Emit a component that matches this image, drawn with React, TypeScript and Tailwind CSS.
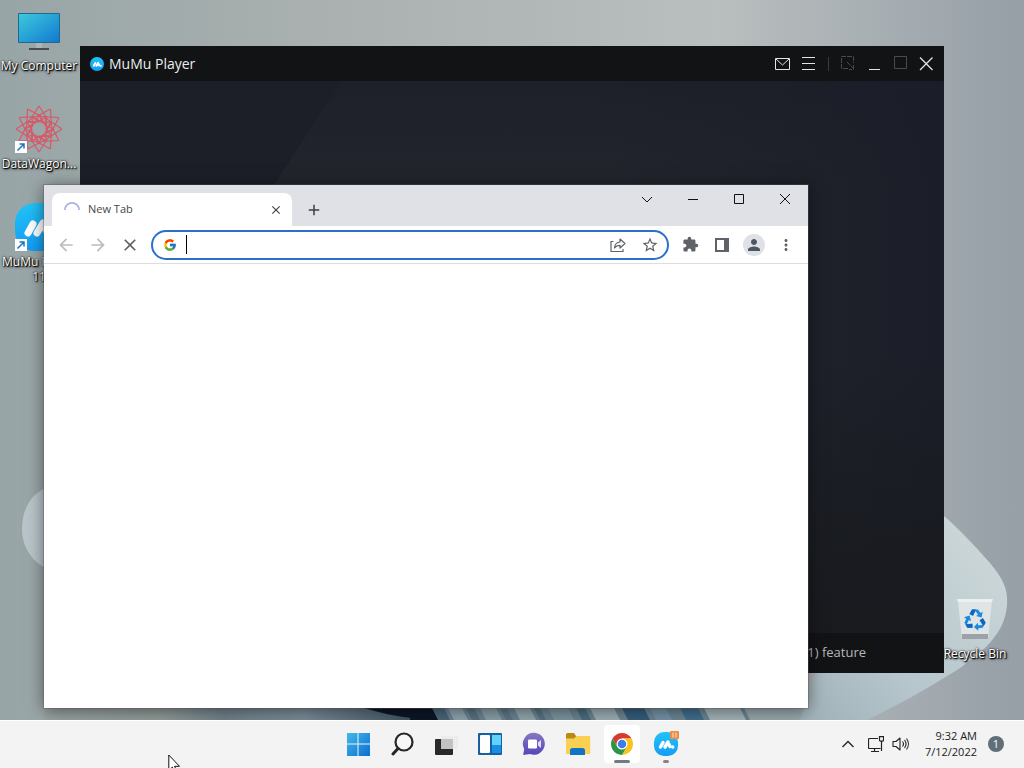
/**
 * App.tsx — desktop with two open windows and a centered taskbar
 */
import type { ReactNode } from 'react'
import { FcGoogle } from 'react-icons/fc'
import { MdArrowBack, MdArrowForward, MdClose, MdExtension, MdMoreVert, MdPerson, MdStarOutline, MdAdd } from 'react-icons/md'

// ─── Logos ────────────────────────────────────────────────────────────────────
function MuMuLogo({ className, round }: { className: string; round?: boolean }) {
  return (
    <svg viewBox="0 0 48 48" className={className} aria-hidden="true">
      <defs>
        <linearGradient id="mumu" x1="0" y1="0" x2="0" y2="1">
          <stop offset="0" stopColor="#22c3f8" />
          <stop offset="1" stopColor="#149cf5" />
        </linearGradient>
      </defs>
      <rect width="48" height="48" rx={round ? 24 : 20} fill="url(#mumu)" />
      <g stroke="#fff" strokeWidth="7" strokeLinecap="round">
        <path d="M13 30l5-9M22 30l6-10M28 21l4 8" />
      </g>
      <circle cx="37.500" cy="30" r="3.500" fill="#fff" />
    </svg>
  )
}

function ChromeLogo() {
  return (
    <svg viewBox="0 0 48 48" className="size-6" aria-hidden="true">
      <path d="M4.95 13A22 22 0 0 1 43.05 13H24L14.5 29.5Z" fill="#d93a2f" />
      <path d="M43.05 13A22 22 0 0 1 24 46L33.5 29.5L24 13Z" fill="#fbc21b" />
      <path d="M24 46A22 22 0 0 1 4.95 13L14.5 29.5H33.5Z" fill="#2b9547" />
      <circle cx="24" cy="24" r="11" fill="#fff" />
      <circle cx="24" cy="24" r="8.5" fill="#3b7de9" />
    </svg>
  )
}

function WindowsLogo() {
  return (
    <svg viewBox="0 0 24 24" className="size-6" aria-hidden="true">
      <defs>
        <linearGradient id="win" x1="0" y1="0" x2="1" y2="1">
          <stop offset="0" stopColor="#43b9ea" />
          <stop offset="1" stopColor="#0a6fd0" />
        </linearGradient>
      </defs>
      <path d="M1 1h10.500v10.500H1zM12.500 1H24v10.500H12.500zM1 12.500h10.500V24H1zM12.500 12.500H24V24H12.500z" fill="url(#win)" />
    </svg>
  )
}

function SearchGlyph() {
  return (
    <svg viewBox="0 0 24 24" className="size-6" fill="none" stroke="#262626" aria-hidden="true">
      <circle cx="14" cy="10" r="8.500" strokeWidth="2.200" fill="#f7f7f7" />
      <path d="M8 16.500L3 22" strokeWidth="3" strokeLinecap="round" />
    </svg>
  )
}

function TaskViewGlyph() {
  return (
    <svg viewBox="0 0 24 24" className="size-6" aria-hidden="true">
      <rect x="1" y="7" width="18" height="16" rx="1" fill="#292929" />
      <rect x="7" y="4" width="17" height="13" rx="1" fill="#ececec" />
      <rect x="7" y="7" width="12" height="10" fill="#c2c2c2" />
    </svg>
  )
}

function WidgetsGlyph() {
  return (
    <svg viewBox="0 0 26 24" className="h-6 w-[26px]" aria-hidden="true">
      <rect x="1" y="1" width="24" height="22" rx="1" fill="#17609f" />
      <rect x="3" y="3" width="10" height="18" rx="1" fill="#fff" />
      <rect x="15" y="3" width="9" height="10" fill="#62d2fa" />
      <rect x="15" y="13" width="9" height="8" fill="#1a8ee6" />
    </svg>
  )
}

function ChatGlyph() {
  return (
    <svg viewBox="0 0 24 24" className="size-6" aria-hidden="true">
      <defs>
        <linearGradient id="chat" x1="0" y1="0" x2="0" y2="1">
          <stop offset="0" stopColor="#8a76c2" />
          <stop offset="1" stopColor="#5148b8" />
        </linearGradient>
      </defs>
      <path d="M12.500 .8a11 11 0 1 1-4.500 21.300L1.200 23l1-6A11 11 0 0 1 12.500 .8z" fill="url(#chat)" />
      <rect x="6" y="7.500" width="9" height="9" rx="1.200" fill="#fff" />
      <path d="M16 10.500l3-2.500v8l-3-2.500z" fill="#e3defa" />
    </svg>
  )
}

function FolderGlyph() {
  return (
    <svg viewBox="0 0 26 24" className="h-6 w-[26px]" aria-hidden="true">
      <path d="M1 2.500A1.500 1.500 0 0 1 2.500 1H9l2 3v3H1z" fill="#b98a14" />
      <path d="M1 6.500h8L11.500 4H24a1.200 1.200 0 0 1 1.200 1.200V22H1z" fill="#fad052" />
      <path d="M5 23v-4.500a2.500 2.500 0 0 1 2.500-2.500h10a2.500 2.500 0 0 1 2.500 2.500V23z" fill="#1273c4" />
    </svg>
  )
}

// ─── Desktop ──────────────────────────────────────────────────────────────────
const FOLDS = [
  { x: 436, w: 12, c: '#4a6779' }, { x: 452, w: 14, c: '#8fa3ac' }, { x: 470, w: 8, c: '#58727f' },
  { x: 484, w: 16, c: '#8a9fa7' }, { x: 504, w: 7, c: '#5d7786' }, { x: 518, w: 16, c: '#92a6ad' },
  { x: 538, w: 6, c: '#587380' }, { x: 552, w: 20, c: '#7c959f' }, { x: 580, w: 9, c: '#4c6c80' },
  { x: 594, w: 24, c: '#9baeb4' }, { x: 626, w: 22, c: '#355d7b' }, { x: 654, w: 16, c: '#7493a6' },
  { x: 684, w: 18, c: '#416e8c' }, { x: 708, w: 36, c: '#a3b3b8' }, { x: 748, w: 60, c: '#98a8ac' },
]

function Wallpaper() {
  return (
    <svg viewBox="0 0 1024 720" preserveAspectRatio="none" className="absolute inset-0 size-full" aria-hidden="true">
      <defs>
        <linearGradient id="sky" x1="0" x2="1">
          <stop offset="0" stopColor="#98a5a6" />
          <stop offset=".3" stopColor="#a9b0af" />
          <stop offset=".7" stopColor="#b9bebe" />
          <stop offset=".92" stopColor="#a0a8ae" />
          <stop offset="1" stopColor="#969ea6" />
        </linearGradient>
        <linearGradient id="petal" x1="0" y1="1" x2="1" y2="0">
          <stop offset="0" stopColor="#9fb1b7" />
          <stop offset=".35" stopColor="#b6c6cc" />
          <stop offset=".8" stopColor="#c9d5d7" />
          <stop offset="1" stopColor="#c5cfd2" />
        </linearGradient>
        <linearGradient id="floor" x1="0" x2="1">
          <stop offset="0" stopColor="#98a3a2" />
          <stop offset=".3" stopColor="#8f9a97" />
          <stop offset=".45" stopColor="#71818a" />
          <stop offset=".65" stopColor="#7b8c98" />
          <stop offset=".85" stopColor="#50636f" />
          <stop offset="1" stopColor="#27405c" />
        </linearGradient>
      </defs>
      <rect width="1024" height="720" fill="url(#sky)" />
      <path d="M44 489C30 495 22 511 22 529S32 561 44 567L90 560V480z" fill="#b9c5ca" />
      <rect x="44" y="700" width="400" height="20" fill="url(#floor)" />
      <path d="M340 700C372 712 402 719 440 720L424 700z" fill="#0d1626" />
      <rect x="424" y="700" width="384" height="20" fill="#6b8593" />
      <path d="M412 700h16l16 20h-34z" fill="#0d1626" />
      {FOLDS.map(f => (
        <path key={f.x} d={`M${f.x - 8} 700h${f.w}l10 20h-${f.w}z`} fill={f.c} />
      ))}
      <path d="M944 516C960 530 974 545 990 563C1004 580 1008 590 1007 605C1005 632 985 651 957 670C930 687 900 704 867 720H800L824 650L900 500z" fill="url(#petal)" />
    </svg>
  )
}

function DesktopIcon({ label, shortcut, children }: { label: string; shortcut?: boolean; children: ReactNode }) {
  return (
    <button className="flex min-h-[98px] w-[78px] flex-col items-center pt-[7px]">
      <span className="relative flex size-12 items-center justify-center">
        {children}
        {shortcut && (
          <span className="absolute bottom-0 left-0 flex size-3 items-center justify-center bg-white">
            <svg viewBox="0 0 12 12" className="size-3" fill="none" stroke="#1b76c0" strokeWidth="1.500" aria-hidden="true">
              <path d="M2.500 9.500L9 3M4.500 3H9v4.500" />
            </svg>
          </span>
        )}
      </span>
      <span className="mt-[3px] text-center text-[12px] leading-[15px] text-white [text-shadow:1px_1px_1px_#000,1px_1px_3px_#000,0_0_2px_#000]">
        {label}
      </span>
    </button>
  )
}

function MonitorArt() {
  return (
    <svg viewBox="0 0 48 48" className="size-12" aria-hidden="true">
      <defs>
        <linearGradient id="screen" x1="0" y1="0" x2="1" y2="1">
          <stop offset="0" stopColor="#3bc9dd" />
          <stop offset="1" stopColor="#1379cf" />
        </linearGradient>
      </defs>
      <rect x="3" y="6" width="42" height="30" rx="1" fill="#20688c" />
      <rect x="4" y="7" width="40" height="28" fill="url(#screen)" />
      <rect x="21" y="36" width="6" height="5" fill="#adb5b7" />
      <rect x="14" y="41" width="20" height="2" fill="#474d50" />
    </svg>
  )
}

function StarArt() {
  return (
    <svg viewBox="-24 -24 48 48" className="size-12" fill="none" stroke="#d65a68" strokeWidth="1.200" aria-hidden="true">
      {/* twelve-pointed outer star with a smaller knot inside */}
      {[0, 30, 60, 90, 120, 150, 180, 210, 240, 270, 300, 330].map(a => (
        <g key={a} transform={`rotate(${a})`}>
          <path d="M0-23L19.900 11.500" opacity="0" />
          <path d="M0-23L9-9M0-23L-9-9" />
          <path d="M-6-12L4-6M-4-6L0-14L4-6" />
        </g>
      ))}
    </svg>
  )
}

function BinArt() {
  return (
    <svg viewBox="0 0 48 48" className="size-12" aria-hidden="true">
      <path d="M7 6h34l-4 38H11z" fill="#dfe4e5" />
      <path d="M6 4h36l-1 3H7z" fill="#edf0f0" />
      <path d="M11 39h26v5H11z" fill="#9da2a8" />
      {[0, 120, 240].map(a => (
        <g key={a} transform={`translate(24 25) rotate(${a})`}>
          <path d="M-5.500-6L-3-10.500H3L5.500-7L7.800-8.200L6.500-2.500L1-4L3-5.300L.5-9L-2-4.200z" fill="#1c8ae2" />
          <path d="M-5.500-6L-3-10.500H1L-2-4.200z" fill="#0f66bd" />
        </g>
      ))}
    </svg>
  )
}

// ─── MuMu window ──────────────────────────────────────────────────────────────
function PlayerButton({ label, children, dim }: { label: string; children: ReactNode; dim?: boolean }) {
  return (
    <button aria-label={label} className={`flex h-full w-[26px] items-center justify-center ${dim ? 'text-[#4a4a4a]' : 'text-[#e4e4e4]'}`}>
      <svg viewBox="0 0 16 16" className="size-4" fill="none" stroke="currentColor" aria-hidden="true">{children}</svg>
    </button>
  )
}

function PlayerWindow() {
  return (
    <section className="absolute top-[46px] bottom-[47px] left-20 flex w-[864px] flex-col bg-[#1c1f27]">
      <header className="flex h-[35px] items-center bg-[#121314] pr-[5px] pl-[10px]">
        <MuMuLogo round className="size-[14px]" />
        <h1 className="ml-[5px] flex-1 text-[14px] leading-5 text-[#ececec]">MuMu Player</h1>
        <PlayerButton label="Messages"><path d="M.5 2.500h14v11H.5zM1 3l6.500 6L14 3" /></PlayerButton>
        <PlayerButton label="Menu"><path d="M1 1.500h13M1 7.500h13M1 13.500h13" /></PlayerButton>
        <span className="mx-[6px] h-[14px] w-px bg-[#3c3c3c]" />
        <PlayerButton label="Keep size" dim><path d="M8 12.500H1.500v-12h12V7M7 6l6 6M13.500 9v4.500H9" strokeDasharray="5 1" /></PlayerButton>
        <PlayerButton label="Minimize player"><path d="M3 13.500h11" /></PlayerButton>
        <PlayerButton label="Maximize player" dim><path d="M2.500 .5h12v12h-12z" /></PlayerButton>
        <PlayerButton label="Close player"><path d="M2 1.500l12.500 12.500M14.500 1.500L2 14" strokeWidth="1.300" /></PlayerButton>
      </header>
      <div className="relative min-h-0 flex-1">
        <svg viewBox="0 0 864 552" preserveAspectRatio="none" className="absolute inset-0 size-full" aria-hidden="true">
          <defs>
            <linearGradient id="facet" x1="0" y1="0" x2="0" y2="1">
              <stop offset="0" stopColor="#1d2029" />
              <stop offset=".2" stopColor="#23262d" />
              <stop offset="1" stopColor="#23262d" />
            </linearGradient>
            <linearGradient id="edge" x1="0" y1="0" x2="1" y2="0">
              <stop offset=".6" stopColor="#1b1e28" stopOpacity="0" />
              <stop offset="1" stopColor="#1b1e28" />
            </linearGradient>
            <linearGradient id="fade" x1="0" y1="0" x2="0" y2="1">
              <stop offset=".5" stopColor="#181a1e" stopOpacity="0" />
              <stop offset="1" stopColor="#181a1e" />
            </linearGradient>
          </defs>
          <path d="M190 110L262 0H864V552H190z" fill="url(#facet)" />
          <rect width="864" height="552" fill="url(#edge)" />
          <rect width="864" height="552" fill="url(#fade)" />
        </svg>
      </div>
      <footer className="flex h-10 items-center justify-end bg-[#121315] pr-[78px] text-[13px] text-[#b8b8b8]">
        1) feature
      </footer>
    </section>
  )
}

// ─── Browser window ───────────────────────────────────────────────────────────
function CaptionButton({ label, children }: { label: string; children: ReactNode }) {
  return (
    <button aria-label={label} className="flex h-[30px] w-[46px] items-center justify-center text-[#111]">
      <svg viewBox="0 0 12 12" className="size-3" fill="none" stroke="currentColor" aria-hidden="true">{children}</svg>
    </button>
  )
}

function ToolButton({ label, children, className }: { label: string; children: ReactNode; className?: string }) {
  return (
    <button aria-label={label} className={`flex size-7 shrink-0 items-center justify-center ${className ?? 'text-[#5f6368]'}`}>
      {children}
    </button>
  )
}

function BrowserWindow() {
  return (
    <section className="absolute top-[185px] bottom-3 left-11 flex w-[764px] flex-col bg-white shadow-[0_0_0_1px_#55585c60,0_2px_16px_#00000080]">
      <header className="flex h-[41px] items-end bg-[#dfe1e6] pl-2">
        <div className="relative flex h-[33px] w-60 items-center rounded-t-lg bg-white pr-2 pl-3">
          <svg viewBox="0 0 16 16" className="size-4" fill="none" stroke="#a9b4e4" strokeWidth="1.800" aria-label="Loading">
            <path d="M.9 8A7.100 7.100 0 0 1 15.100 8" />
          </svg>
          <span className="ml-2 flex-1 text-[11px] text-[#45494d]">New Tab</span>
          <button aria-label="Close tab" className="flex size-4 items-center justify-center text-[#3c4043]"><MdClose size={14} /></button>
        </div>
        <button aria-label="Open new tab" className="ml-2 flex h-[33px] w-7 items-center justify-center text-[#3c4043]">
          <MdAdd size={18} />
        </button>
        <div className="ml-auto flex self-start">
          <CaptionButton label="Search tabs"><path d="M1 3l5 5 5-5" /></CaptionButton>
          <CaptionButton label="Minimize"><path d="M1 5.500h10" /></CaptionButton>
          <CaptionButton label="Maximize"><path d="M1.500 .5h9v9h-9z" /></CaptionButton>
          <CaptionButton label="Close"><path d="M1 0l10 10M11 0L1 10" /></CaptionButton>
        </div>
      </header>

      {/* Toolbar */}
      <div className="flex h-[38px] items-center border-b border-[#dcdde0] px-2">
        <div className="flex gap-1">
          <ToolButton label="Back" className="text-[#bbbdc0]"><MdArrowBack size={20} /></ToolButton>
          <ToolButton label="Forward" className="text-[#bbbdc0]"><MdArrowForward size={20} /></ToolButton>
          <ToolButton label="Stop"><MdClose size={20} /></ToolButton>
        </div>
        <form className="mx-[7px] flex h-[30px] min-w-0 flex-1 items-center rounded-full border-2 border-[#2c6fcb] pr-[3px] pl-[10px]">
          <FcGoogle size={14} className="shrink-0" />
          <span className="ml-[9px] h-[19px] w-px bg-black" />
          <input type="text" aria-label="Address and search bar" className="min-w-0 flex-1 text-[14px] outline-none" />
          <div className="flex gap-1">
            <ToolButton label="Share">
              <svg viewBox="0 0 16 16" className="size-4" fill="none" stroke="currentColor" strokeWidth="1.200" aria-hidden="true">
                <path d="M3.500 4.500H1v10h12V12" />
                <path d="M4.500 11C4.700 7.500 6.500 5.300 10 5V2l5 4.500-5 4.500V8.300C7.500 8.300 5.800 9.200 4.500 11z" strokeLinejoin="round" />
              </svg>
            </ToolButton>
            <ToolButton label="Bookmark"><MdStarOutline size={18} /></ToolButton>
          </div>
        </form>
        <div className="flex gap-1">
          <ToolButton label="Extensions"><MdExtension size={17} /></ToolButton>
          <ToolButton label="Side panel">
            <svg viewBox="0 0 14 14" className="size-[14px]" aria-hidden="true">
              <path d="M1 1h12v12H1z" fill="none" stroke="currentColor" strokeWidth="2" />
              <path d="M9 1h4v12H9z" fill="currentColor" />
            </svg>
          </ToolButton>
          <ToolButton label="Profile">
            <span className="flex size-[22px] items-center justify-center rounded-full bg-[#dee1e6] text-[#4d5761]"><MdPerson size={18} /></span>
          </ToolButton>
          <ToolButton label="Browser menu"><MdMoreVert size={18} /></ToolButton>
        </div>
      </div>
      <main className="flex-1 bg-white" />
    </section>
  )
}

// ─── Taskbar ──────────────────────────────────────────────────────────────────
const APPS: { name: string; icon: ReactNode; state?: 'active' | 'open' }[] = [
  { name: 'Start',         icon: <WindowsLogo /> },
  { name: 'Search',        icon: <SearchGlyph /> },
  { name: 'Task View',     icon: <TaskViewGlyph /> },
  { name: 'Widgets',       icon: <WidgetsGlyph /> },
  { name: 'Chat',          icon: <ChatGlyph /> },
  { name: 'File Explorer', icon: <FolderGlyph /> },
  { name: 'Chrome',        icon: <ChromeLogo />, state: 'active' },
  { name: 'MuMu',          icon: <MuMuTask />, state: 'open' },
]

function MuMuTask() {
  return (
    <span className="relative">
      <MuMuLogo className="size-6" />
      <svg viewBox="0 0 9 8" className="absolute -top-px -right-px h-2 w-[9px]" aria-hidden="true">
        <rect width="9" height="8" rx="1" fill="#ee8b45" />
        <path d="M3 1.500v5M6 1.500v5" stroke="#ffe3c8" />
      </svg>
    </span>
  )
}

function Taskbar() {
  return (
    <footer className="relative grid h-12 shrink-0 grid-cols-[1fr_auto_1fr] items-center bg-[#f3f3f3] shadow-[inset_0_1px_0_#fff]">
      <nav className="col-start-2 flex gap-2">
        {APPS.map(a => (
          <button key={a.name} aria-label={a.name}
            className={`relative flex h-[38px] w-9 items-center justify-center rounded ${a.state === 'active' ? 'bg-white' : ''}`}>
            {a.icon}
            {a.state === 'active' && <span className="absolute bottom-0 h-[3px] w-4 rounded-full bg-[#747a80]" />}
            {a.state === 'open' && <span className="absolute bottom-0 h-[3px] w-[6px] rounded-full bg-[#858585]" />}
          </button>
        ))}
      </nav>
      <div className="flex items-center justify-end pr-5 text-[#222]">
        <button aria-label="Show hidden icons" className="mr-[14px]">
          <svg viewBox="0 0 12 12" className="size-3" fill="none" stroke="currentColor" strokeWidth="1.300" aria-hidden="true"><path d="M0.500 9L6 3.500 11.500 9" /></svg>
        </button>
        <button aria-label="Network and volume" className="flex items-center gap-2">
          <svg viewBox="0 0 16 16" className="size-4" fill="none" stroke="currentColor" strokeWidth="1.200" aria-hidden="true">
            <path d="M10 2.500H1.500a1 1 0 0 0-1 1v8a1 1 0 0 0 1 1h11M6.500 12.500v3M3 15.500h8M11.500 .6h4v3.500a1 1 0 0 1-1 1h-2a1 1 0 0 1-1-1zM13.500 5v10" />
          </svg>
          <svg viewBox="0 0 18 16" className="h-4 w-[18px]" fill="none" stroke="currentColor" strokeWidth="1.100" aria-hidden="true">
            <path d="M1 5.500h3L8 2v12l-4-3.500H1zM10.500 5.500a4 4 0 0 1 0 5M12.500 4a6.500 6.500 0 0 1 0 8M14.500 2.500a9 9 0 0 1 0 11" strokeLinejoin="round" />
          </svg>
        </button>
        <button className="w-[67px] text-right text-[11px] leading-4">
          <time className="block">9:32 AM</time>
          <time className="block">7/12/2022</time>
        </button>
        <button aria-label="Notifications" className="ml-[11px] flex size-4 items-center justify-center rounded-full bg-[#5f6e77] text-[11px] leading-4 text-white">
          1
        </button>
      </div>
    </footer>
  )
}

export default function App() {
  return (
    <div className="relative flex h-screen flex-col overflow-hidden font-['Open_Sans','Noto_Sans',sans-serif]">
      <div className="relative min-h-0 flex-1 overflow-hidden">
        <Wallpaper />
        <div className="relative flex w-[78px] flex-col">
          <DesktopIcon label="My Computer"><MonitorArt /></DesktopIcon>
          <DesktopIcon label="DataWagon..." shortcut><StarArt /></DesktopIcon>
          <DesktopIcon label="MuMu Player 11" shortcut><MuMuLogo className="size-12" /></DesktopIcon>
        </div>
        <PlayerWindow />
        <BrowserWindow />
        <div className="absolute right-[10px] bottom-[34px]">
          <DesktopIcon label="Recycle Bin"><BinArt /></DesktopIcon>
        </div>
      </div>
      <Taskbar />

      {/* Pointer */}
      <svg viewBox="0 0 12 19" className="pointer-events-none absolute top-[754px] left-[168px] h-[19px] w-3" fill="#fff" stroke="#111" aria-hidden="true">
        <path d="M.8 1v15.500l3.600-3.400 2.300 5.200 2.200-1-2.300-5H11.500z" />
      </svg>
    </div>
  )
}
